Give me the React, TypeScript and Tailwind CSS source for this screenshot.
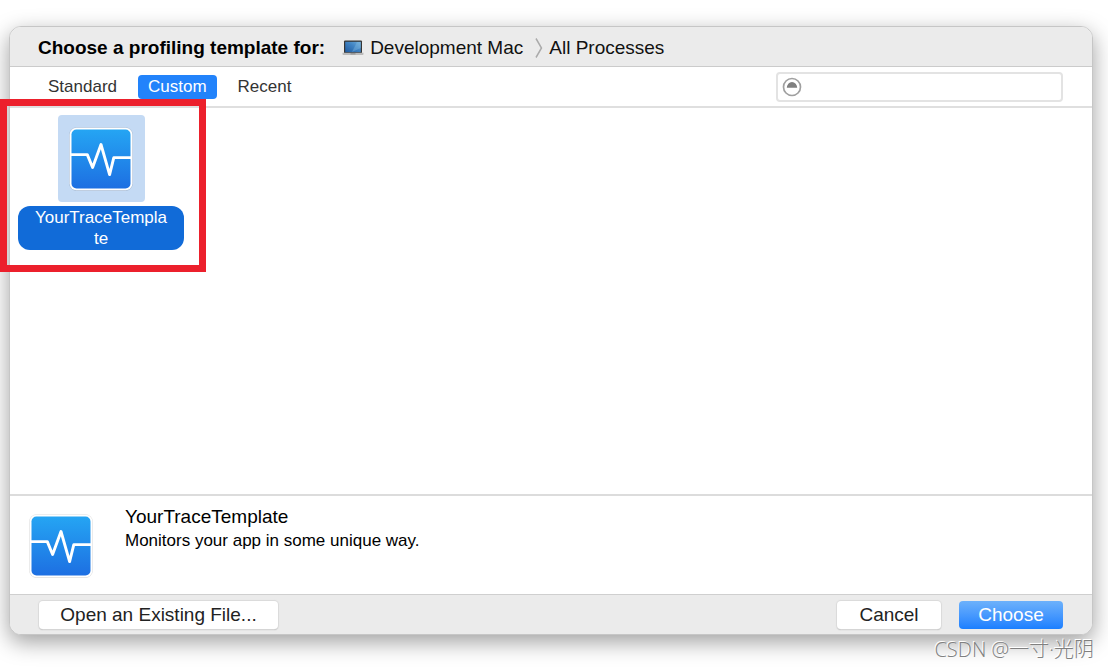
import { useState } from "react";

const tabs = ["Standard", "Custom", "Recent"];

function TraceIcon({ id }: { id: string }) {
  return (
    <svg viewBox="0 0 64 64" className="size-16 shrink-0" aria-hidden="true">
      <defs>
        <linearGradient id={id} x1="0" y1="0" x2="0" y2="1">
          <stop offset="0" stopColor="#25a5f3" />
          <stop offset="1" stopColor="#1d6fe2" />
        </linearGradient>
      </defs>
      <rect x="0" y="0.2" width="64" height="63.8" rx="8" fill="#000" opacity="0.13" />
      <rect x="0.6" y="0.8" width="62.8" height="62.4" rx="7" fill="#fff" />
      <rect x="2.5" y="2.5" width="59" height="59" rx="5" fill={`url(#${id})`} />
      <path d="M2 27.6H18.3L23.6 40.5L32 17.5L40.6 47.6L44.8 30.6H62" fill="none" stroke="#fff" strokeWidth="2.9" strokeLinejoin="round" />
    </svg>
  );
}

function LaptopIcon() {
  return (
    <svg viewBox="0 0 22 16" className="h-4 w-[22px] shrink-0" aria-hidden="true">
      <defs>
        <linearGradient id="screen" x1="0" y1="1" x2="1" y2="0">
          <stop offset="0" stopColor="#1f5a9f" />
          <stop offset="0.55" stopColor="#3f82c2" />
          <stop offset="1" stopColor="#6dacd9" />
        </linearGradient>
      </defs>
      <rect x="2" y="0.5" width="18" height="13" rx="1" fill="#353535" />
      <rect x="3.2" y="1.8" width="15.6" height="10.4" fill="url(#screen)" />
      <path d="M10 12L15 2h3.8v6z" fill="#8dc3e4" opacity="0.35" />
      <path d="M0.5 12.8h21v1.4q0 .8-1 .8h-19q-1 0-1-.8z" fill="#bababa" />
      <path d="M8.5 13.4h5v.9h-5z" fill="#777" />
    </svg>
  );
}

export default function App() {
  const [tab, setTab] = useState("Custom");
  const [query, setQuery] = useState("");

  return (
    <div className="relative flex min-h-screen flex-col overflow-hidden bg-white pt-[26px] pr-[15px] pb-[33px] pl-[9px] font-['Liberation_Sans',Arial,sans-serif] text-[#111]">
      <main className="flex flex-1 flex-col overflow-hidden rounded-xl border border-[#c6c6c6] bg-white shadow-[0_7px_22px_rgba(0,0,0,0.38)]">
        <header className="flex h-10 items-center border-b border-[#cbcbcb] bg-[#ebebeb] px-7 pt-[3px] text-[19px] whitespace-nowrap">
          <h1 className="font-bold text-black">Choose a profiling template for:</h1>
          <div className="ml-[17px] flex items-center gap-1.5">
            <LaptopIcon />
            <span>Development Mac</span>
          </div>
          <svg viewBox="0 0 8 20" className="mr-1.5 ml-3 h-5 w-2" fill="none" stroke="#ababab" strokeWidth="1.5" aria-hidden="true">
            <path d="M1 0.5L6.5 10L1 19.5" />
          </svg>
          <span>All Processes</span>
        </header>

        <div className="flex h-[41px] items-center justify-between border-b-2 border-[#dfdfdf] pr-[29px] pl-7">
          <div role="tablist" className="flex gap-[11px] text-[17px] leading-6">
            {tabs.map((name) => (
              <button
                key={name}
                role="tab"
                aria-selected={tab === name}
                onClick={() => setTab(name)}
                className={tab === name ? "rounded bg-[#2283fb] px-2.5 text-white" : "rounded px-2.5 text-[#333]"}
              >
                {name}
              </button>
            ))}
          </div>
          <label className="flex h-[30px] w-[287px] items-center gap-2 rounded border-2 border-[#e3e3e3] bg-white px-1">
            <svg viewBox="0 0 20 20" className="size-5 shrink-0" aria-hidden="true">
              <circle cx="10" cy="10" r="8.5" fill="none" stroke="#a0a0a0" strokeWidth="1.7" />
              <path d="M4.8 10.8a5.2 5.9 0 0 1 10.4 0z" fill="#808080" />
            </svg>
            <input
              type="search"
              aria-label="Search templates"
              value={query}
              onChange={(e) => setQuery(e.target.value)}
              className="min-w-0 flex-1 text-[17px] outline-none"
            />
          </label>
        </div>

        <section className="flex-1 px-2 pt-[7px]">
          <button className="flex w-[166px] flex-col items-center gap-1">
            <span className="flex size-[87px] items-center justify-center rounded bg-[#c4daf4]">
              <TraceIcon id="grid-icon" />
            </span>
            <span className="w-full rounded-xl bg-[#116bd8] px-4 pt-px pb-px text-[17px] leading-[21px] break-all text-white">
              YourTraceTemplate
            </span>
          </button>
        </section>

        <section className="flex h-[100px] items-start border-t-2 border-[#dcdcdc] px-[19px]">
          <div className="pt-[18px]">
            <TraceIcon id="detail-icon" />
          </div>
          <div className="pt-[9px] pl-8 text-black">
            <h2 className="text-[19px] leading-6">YourTraceTemplate</h2>
            <p className="text-[17px] leading-6">Monitors your app in some unique way.</p>
          </div>
        </section>

        <footer className="flex h-10 items-center gap-[18px] border-t border-[#cfcfcf] bg-[#ebebeb] px-[29px] text-[19px] text-[#222]">
          <button className="mr-auto h-7 w-[239px] rounded bg-white shadow-[0_0_1px_1px_#dadada,0_1px_1px_#aaa]">Open an Existing File...</button>
          <button className="h-7 w-[104px] rounded bg-white shadow-[0_0_1px_1px_#dadada,0_1px_1px_#aaa]">Cancel</button>
          <button className="h-7 w-[104px] rounded bg-linear-to-b from-[#6cb1fb] to-[#1a7fff] text-white">Choose</button>
        </footer>
      </main>

      {/* highlight around the selected template */}
      <div className="pointer-events-none absolute top-[99px] left-0 h-[173px] w-[206px] border-[7px] border-[#ec202c]" />
      <p className="absolute right-3.5 bottom-1 font-['Open_Sans','Noto_Sans_CJK_SC',sans-serif] text-[20px] leading-7 font-light text-[#808080] [text-shadow:-1px_-1px_0_#fff]">
        CSDN @一寸·光阴
      </p>
    </div>
  );
}
